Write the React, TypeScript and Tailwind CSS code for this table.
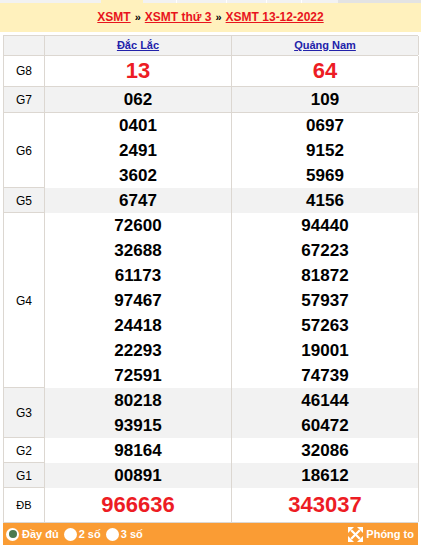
import React from "react";

type Row = {
  label: string;
  h: string;
  big?: boolean;
  left: string[];
  right: string[];
};

const rows: Row[] = [
  { label: "G8", h: "h-[31px]", big: true, left: ["13"], right: ["64"] },
  { label: "G7", h: "h-[26px]", left: ["062"], right: ["109"] },
  { label: "G6", h: "h-[75px]", left: ["0401", "2491", "3602"], right: ["0697", "9152", "5969"] },
  { label: "G5", h: "h-[25px]", left: ["6747"], right: ["4156"] },
  {
    label: "G4",
    h: "h-[175px]",
    left: ["72600", "32688", "61173", "97467", "24418", "22293", "72591"],
    right: ["94440", "67223", "81872", "57937", "57263", "19001", "74739"],
  },
  { label: "G3", h: "h-[50px]", left: ["80218", "93915"], right: ["46144", "60472"] },
  { label: "G2", h: "h-[25px]", left: ["98164"], right: ["32086"] },
  { label: "G1", h: "h-[25px]", left: ["00891"], right: ["18612"] },
  { label: "ĐB", h: "h-[35px]", big: true, left: ["966636"], right: ["343037"] },
];

function Cell({ nums, big, bg }: { nums: string[]; big?: boolean; bg: string }) {
  return (
    <div className={`flex flex-col items-center justify-center border-r border-[#dcd7d1] ${bg}`}>
      {nums.map((n) => (
        <div
          key={n}
          className={
            big
              ? "text-[22px] font-bold leading-[28px] text-[#ed1c24]"
              : "text-[17px] font-bold leading-[25px] text-black"
          }
        >
          {n}
        </div>
      ))}
    </div>
  );
}

function ExpandIcon() {
  return (
    <svg width="15" height="15" viewBox="0 0 15 15" className="mr-[3px]">
      <g stroke="white" strokeWidth="2.2" strokeLinecap="square">
        <line x1="4" y1="4" x2="11" y2="11" />
        <line x1="11" y1="4" x2="4" y2="11" />
      </g>
      <g fill="white">
        <polygon points="0,0 6,0 0,6" />
        <polygon points="15,0 9,0 15,6" />
        <polygon points="0,15 6,15 0,9" />
        <polygon points="15,15 9,15 15,9" />
      </g>
    </svg>
  );
}

export default function App() {
  return (
    <div className="w-[421px] h-[547px] bg-white font-['Liberation_Sans',Arial,sans-serif]">
      {/* tab strip remnant */}
      <div className="flex h-[3px]">
        <div className="w-[101px] bg-[#f2f2f2]" />
        <div className="w-[42px] bg-[#fff1bd]" />
        <div className="w-[34px] bg-[#f2f2f2] border-r border-white" />
        <div className="w-[50px] bg-[#f2f2f2] border-r border-white" />
        <div className="w-[40px] bg-[#f2f2f2] border-r border-white" />
        <div className="w-[35px] bg-[#f2f2f2] border-r border-white" />
        <div className="w-[36px] bg-[#f2f2f2]" />
        <div className="flex-1 bg-[#e3e3e3]" />
      </div>

      {/* breadcrumb */}
      <div className="h-[29px] bg-[#fff1bd] flex items-center justify-center text-[12px] font-bold pb-[1px]">
        <a className="text-[#e8141c] underline">XSMT</a>
        <span className="mx-[4px] text-[11px] text-black">»</span>
        <a className="text-[#e8141c] underline">XSMT thứ 3</a>
        <span className="mx-[4px] text-[11px] text-black">»</span>
        <a className="text-[#e8141c] underline">XSMT 13-12-2022</a>
      </div>

      <div className="mt-[3px] mx-[3px] border-t border-l border-[#dcd7d1]">
        {/* header row */}
        <div className="grid grid-cols-[41px_187px_187px] h-[20px] bg-[#f2f2f2] border-b border-[#dcd7d1]">
          <div className="border-r border-[#dcd7d1]" />
          <div className="flex items-center justify-center border-r border-[#dcd7d1]">
            <a className="text-[11px] font-bold text-[#2222aa] underline">Đắc Lắc</a>
          </div>
          <div className="flex items-center justify-center border-r border-[#dcd7d1]">
            <a className="text-[11px] font-bold text-[#2222aa] underline">Quảng Nam</a>
          </div>
        </div>

        {rows.map((r, i) => {
          const bg = i % 2 === 0 ? "bg-white" : "bg-[#f2f2f2]";
          return (
            <div
              key={r.label}
              className={`grid grid-cols-[41px_187px_187px] ${r.h} border-b border-[#dcd7d1] ${bg}`}
            >
              <div
                className={`flex items-center justify-center border-r border-[#dcd7d1] text-black ${
                  r.label === "ĐB" ? "text-[11px]" : "text-[12px]"
                }`}
              >
                {r.label}
              </div>
              <Cell nums={r.left} big={r.big} bg={bg} />
              <Cell nums={r.right} big={r.big} bg={bg} />
            </div>
          );
        })}

        {/* footer */}
        <div className="-ml-px h-[22px] bg-[#fa9c34] flex items-center justify-between pl-[3px] pr-[4px] text-white text-[11px] font-bold">
          <div className="flex items-center">
            <span className="w-[13px] h-[13px] rounded-full bg-white flex items-center justify-center mr-[3px]">
              <span className="w-[8px] h-[8px] rounded-full bg-[#4c7a4f]" />
            </span>
            <span className="mr-[5px]">Đầy đủ</span>
            <span className="w-[13px] h-[13px] rounded-full bg-white mr-[2px]" />
            <span className="mr-[5px]">2 số</span>
            <span className="w-[13px] h-[13px] rounded-full bg-white mr-[2px]" />
            <span>3 số</span>
          </div>
          <div className="flex items-center">
            <ExpandIcon />
            <span>Phóng to</span>
          </div>
        </div>
      </div>
    </div>
  );
}
